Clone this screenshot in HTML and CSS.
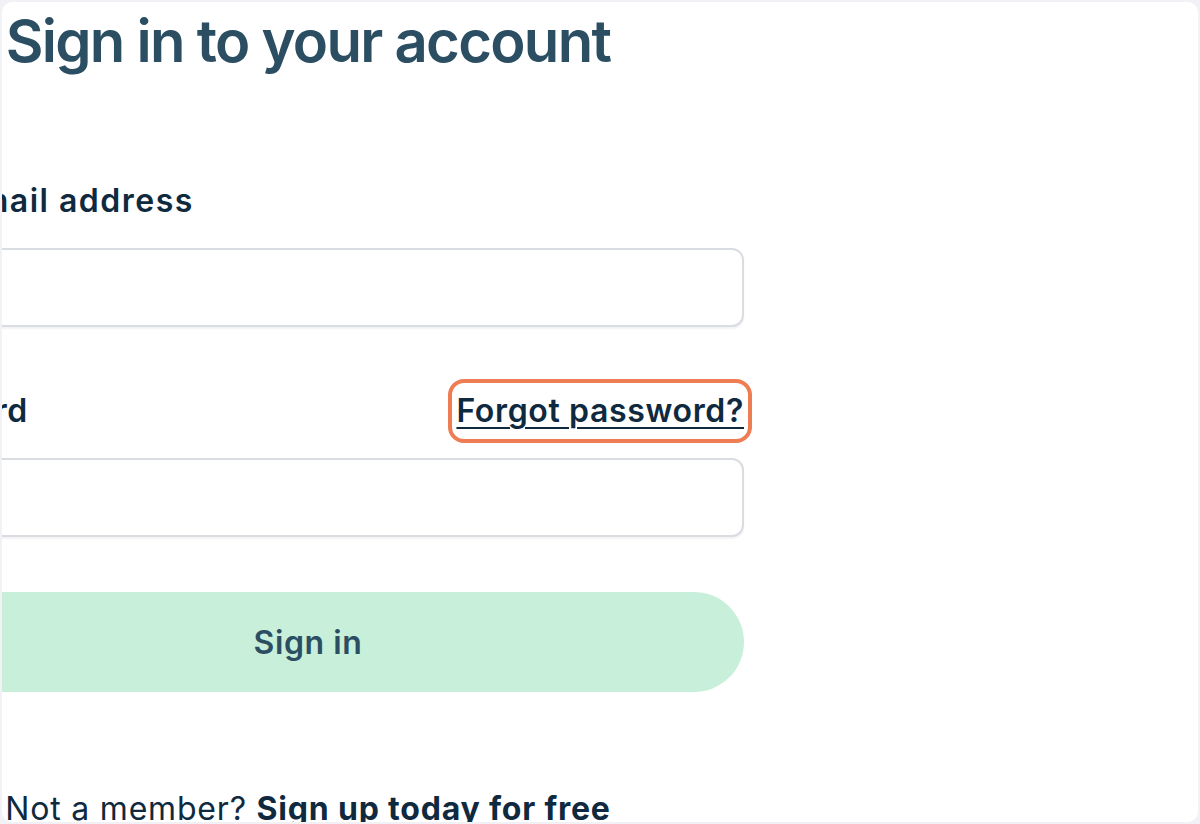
FILE: index.html
```html
<!DOCTYPE html>
<html lang="en">
<head>
    <meta charset="UTF-8">
    <meta name="viewport" content="width=device-width, initial-scale=1.0">
    <title>Sign in</title>
    <link rel="stylesheet" href="styles.css">
</head>
<body>
    <div class="frame">
        <div class="signin">
            <h1 class="title">Sign in to your account</h1>

            <form class="form" action="#" method="post">
                <div class="field">
                    <label class="label" for="email">Your email address</label>
                    <input class="input" id="email" name="email" type="email" autocomplete="email">
                </div>

                <div class="field">
                    <div class="label-row">
                        <label class="label label-tight" for="password">Password</label>
                        <a class="forgot" href="#">Forgot password?</a>
                    </div>
                    <input class="input" id="password" name="password" type="password" autocomplete="current-password">
                </div>

                <button class="btn" type="submit">Sign in</button>
            </form>

            <p class="footer">Not a member? <a href="#">Sign up today for free</a></p>
        </div>
    </div>
</body>
</html>
```

FILE: styles.css
```css
body {
    margin: 0;
    background: #f1f1f6;
    font-family: Inter, "Noto Sans", sans-serif;
    color: #0f2a3f;
}
.frame {
    margin: 2px;
    height: 820px;
    background: #fff;
    border-radius: 10px;
    overflow: hidden;
}
.signin {
    width: 872px;
    margin-left: -130px;
    padding-top: 3px;
}
.title {
    margin: 0;
    font-size: 58px;
    line-height: 72px;
    font-weight: 600;
    letter-spacing: -1.7px;
    text-align: center;
    color: #2b4e63;
}
.form {
    margin-top: 100px;
}
.field + .field {
    margin-top: 60px;
}
.label {
    display: block;
    font-size: 32px;
    line-height: 48px;
    font-weight: 600;
    letter-spacing: 1.5px;
}
.label-tight {
    letter-spacing: 0.5px;
}
.label-row {
    display: flex;
    justify-content: space-between;
    align-items: center;
}
.forgot {
    font-size: 32px;
    line-height: 48px;
    font-weight: 600;
    letter-spacing: 0.65px;
    color: #0f2a3f;
    text-decoration: underline;
    text-underline-offset: 5px;
    text-decoration-thickness: 2px;
    outline: 4px solid #ee7d53;
    outline-offset: 4px;
    border-radius: 8px;
}
.input {
    display: block;
    box-sizing: border-box;
    width: 100%;
    height: 79px;
    margin-top: 23px;
    border: 2px solid #d9dce1;
    border-radius: 12px;
    background: #fff;
    box-shadow: 0 2px 2px rgba(0, 0, 0, 0.05);
}
.btn {
    display: block;
    width: 100%;
    height: 100px;
    margin-top: 55px;
    border: 0;
    border-radius: 50px;
    background: #c8efd9;
    font-family: inherit;
    font-size: 32px;
    font-weight: 600;
    letter-spacing: 0.6px;
    color: #2b4e63;
}
.footer {
    margin: 93px 0 0;
    font-size: 32px;
    line-height: 48px;
    text-align: center;
    letter-spacing: 0.8px;
}
.footer a {
    font-weight: 700;
    color: #0f2a3f;
    text-decoration: none;
}
```
